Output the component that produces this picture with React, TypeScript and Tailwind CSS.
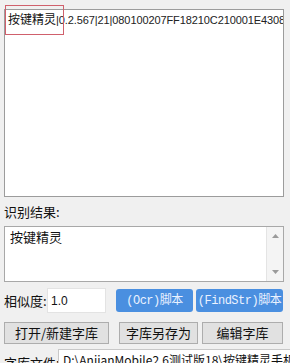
import React from 'react';

const cjk = "font-['Noto_Sans_CJK_SC','Noto_Sans',sans-serif]";

function ScrollArrow({ up }: { up: boolean }) {
  return (
    <svg width="7" height="4" viewBox="0 0 7 4">
      <path d={up ? 'M0 4 L3.5 0 L7 4 Z' : 'M0 0 L3.5 4 L7 0 Z'} fill="#9a9a9a" />
    </svg>
  );
}

export default function App() {
  return (
    <div className={`w-[290px] h-[363px] overflow-hidden bg-[#f0f0f0] pl-[4px] pr-[6px] text-[12px] text-[#111] ${cjk}`}>
      {/* 字库内容 */}
      <div className="relative mt-[9px] h-[188px] border border-[#9c9c9c] bg-white overflow-visible">
        <div className="overflow-hidden whitespace-nowrap pl-[3px] pt-[1px] leading-[16px]">
          <span className="text-[12px]">按键精灵</span>
          <span className="font-['Liberation_Sans',sans-serif] text-[11px] tracking-[-0.1px] text-[#222]">
            |0.2.567|21|080100207FF18210C210001E4308
          </span>
        </div>
        <div className="absolute left-[0px] top-[-5px] w-[59px] h-[30px] border border-[#d0606c]" />
      </div>

      <div className="h-[29px] flex items-center pt-[1px] leading-[16px] text-[13px]">识别结果:</div>

      {/* 识别结果 */}
      <div className="flex h-[56px] border border-[#a8a8a8] bg-white">
        <div className="flex-1 pl-[5px] pt-[2px] leading-[16px] text-[13px]">按键精灵</div>
        <div className="w-[17px] bg-[#f4f4f4] border-l border-[#e4e4e4] flex flex-col items-center justify-between py-[7px]">
          <ScrollArrow up />
          <ScrollArrow up={false} />
        </div>
      </div>

      <div className="mt-[6px] flex items-center h-[25px]">
        <span className="w-[43px] shrink-0 whitespace-nowrap text-[13px] leading-[16px]">相似度:</span>
        <div className="w-[59px] h-[25px] bg-white border border-[#e3e3e3] flex items-center pl-[3px] font-['Liberation_Sans',sans-serif] text-[12px]">
          1.0
        </div>
        <button className="ml-[10px] w-[77px] h-[23px] rounded-[3px] bg-[#4a8fe0] text-[#eaf2ff] text-[12px] font-['Liberation_Mono','Noto_Sans_CJK_SC',monospace] tracking-[-0.5px]">
          (Ocr)脚本
        </button>
        <button className="ml-[3px] w-[87px] h-[23px] rounded-[3px] bg-[#4a8fe0] text-[#eaf2ff] text-[12px] font-['Liberation_Mono','Noto_Sans_CJK_SC',monospace] tracking-[-0.5px]">
          (FindStr)脚本
        </button>
      </div>

      <div className="mt-[9px] flex items-center h-[22px]">
        <button className="w-[105px] h-[22px] border border-[#adadad] bg-[#e1e1e1] text-[13px] leading-[16px]">
          打开/新建字库
        </button>
        <button className="ml-[10px] w-[79px] h-[22px] border border-[#adadad] bg-[#e1e1e1] text-[13px] leading-[16px]">
          字库另存为
        </button>
        <button className="ml-[4px] w-[81px] h-[22px] border border-[#adadad] bg-[#e1e1e1] text-[13px] leading-[16px]">
          编辑字库
        </button>
      </div>

      <div className="mt-[5px] flex items-start">
        <span className="w-[54px] shrink-0 whitespace-nowrap pt-[6px] text-[13px] leading-[16px]">字库文件:</span>
        <div className="flex-1 -mr-[8px] h-[22px] border border-[#c8c8c8] bg-white pl-[4px] pt-[2px] whitespace-nowrap overflow-hidden text-[12px] leading-[16px]">
          D:\AnjianMobile2.6测试版18\按键精灵手机E
        </div>
      </div>
    </div>
  );
}
